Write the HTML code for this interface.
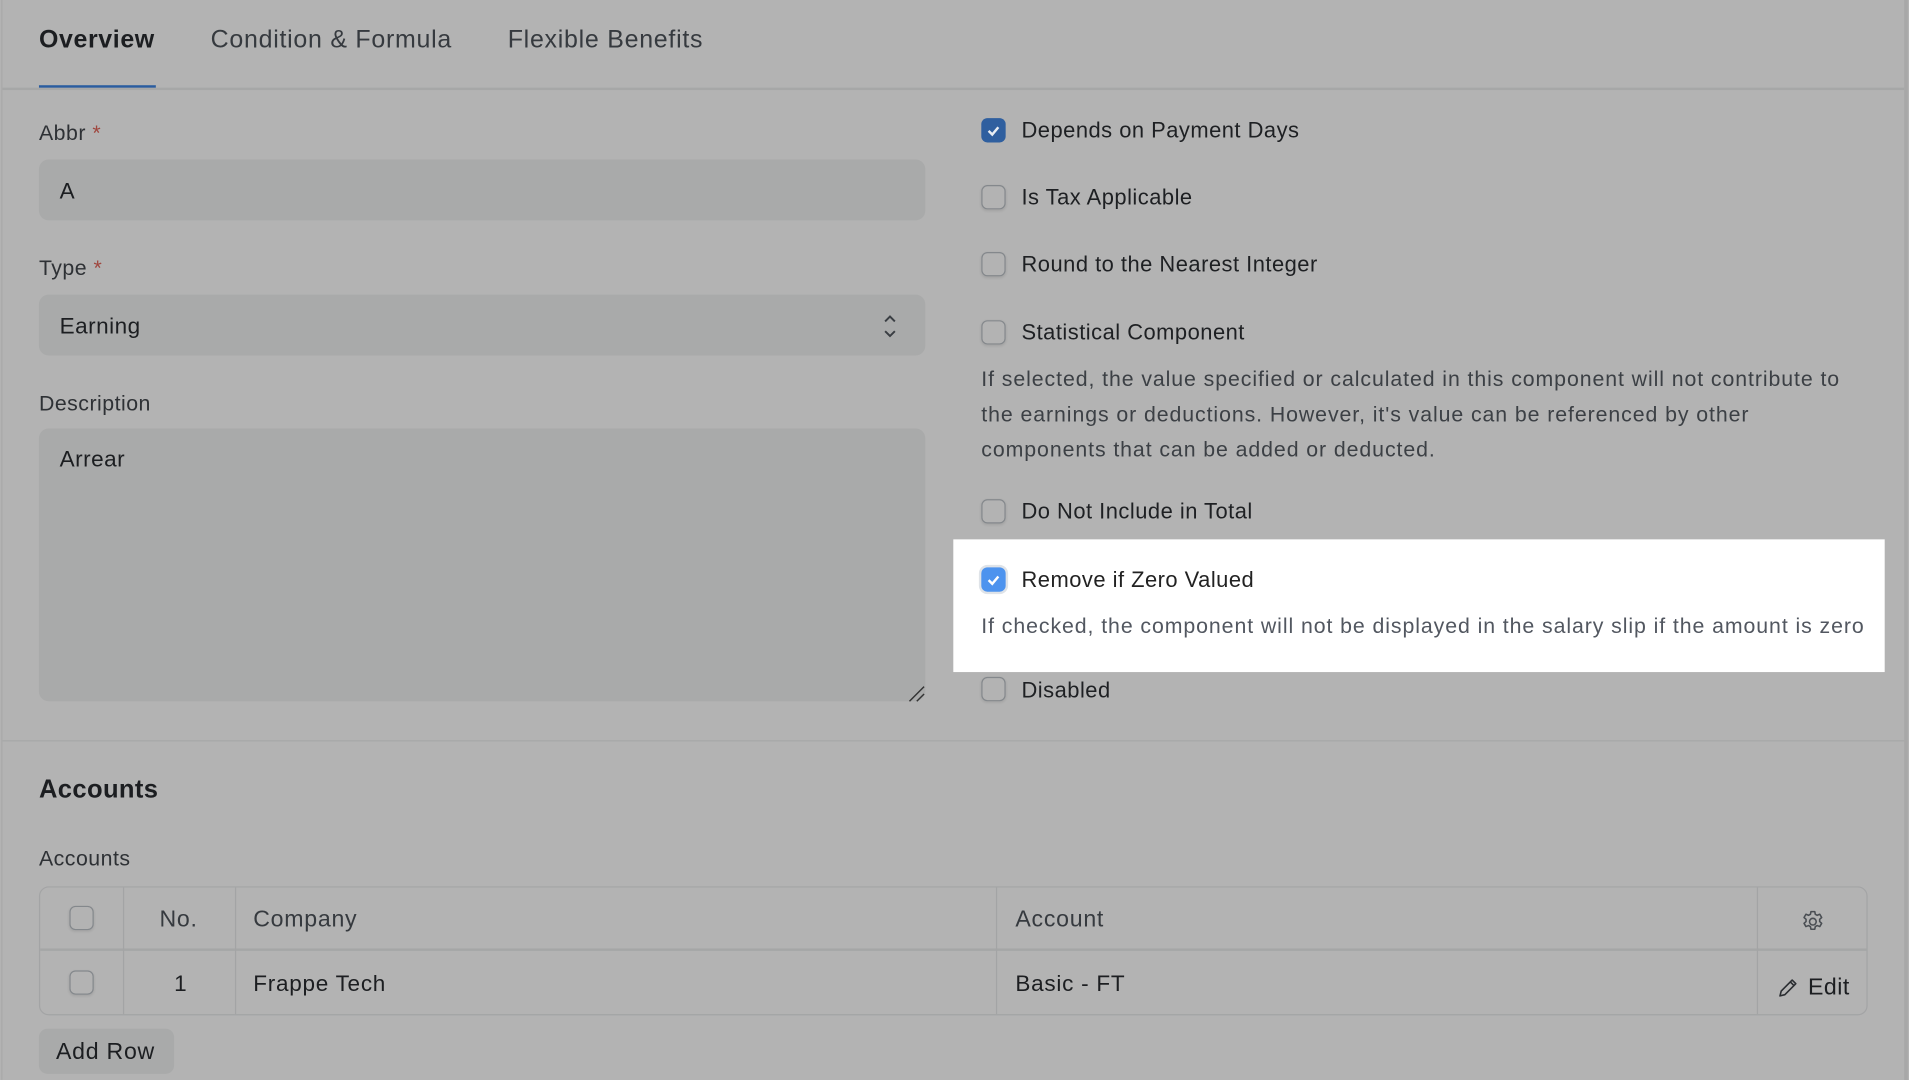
<!DOCTYPE html>
<html><head><meta charset="utf-8"><style>
html,body{margin:0;padding:0;width:1909px;height:1080px;overflow:hidden;background:#b3b3b3;font-family:"Liberation Sans",sans-serif;}
#w{position:absolute;left:0;top:0;width:1568px;height:887px;transform:scale(1.2175);transform-origin:0 0;}
.a{position:absolute;white-space:nowrap;}
.t{color:#1c1e21;}
.lab{font-size:17.5px;color:#2e3135;letter-spacing:0.4px;}
.inp{position:absolute;left:32px;width:728px;background:#a9aaaa;border-radius:8px;}
.cb{position:absolute;width:18px;height:18px;border:1.5px solid #84888c;border-radius:5px;box-shadow:0 1px 2px rgba(0,0,0,.1);}
.cbon{position:absolute;width:20px;height:20px;border-radius:5px;background:#2f5f9f;}
.cl{font-size:18px;color:#1e2023;letter-spacing:0.4px;}
.desc{font-size:17.5px;color:#3c4045;line-height:29px;letter-spacing:0.75px;}
.vl{position:absolute;width:1px;background:#a3a4a5;}
.tb{letter-spacing:0.6px;}
</style></head><body><div id="w">
<div class="a" style="left:1px;top:0;width:1px;height:887px;background:#a9a9a9"></div>
<div class="a" style="left:1564px;top:0;width:3px;height:887px;background:#a8a8a8"></div>
<div class="a t" style="left:32px;top:21px;font-size:20.5px;font-weight:bold;letter-spacing:0.5px;">Overview</div>
<div class="a tb" style="left:173px;top:21px;font-size:20.5px;color:#363a3f;">Condition &amp; Formula</div>
<div class="a tb" style="left:417px;top:21px;font-size:20.5px;color:#363a3f;">Flexible Benefits</div>
<div class="a" style="left:2px;top:72px;width:1562px;height:2px;background:#a6a7a7"></div>
<div class="a" style="left:32px;top:70px;width:96px;height:2px;background:#2a5c9f"></div>

<div class="a lab" style="left:32px;top:99px;">Abbr <span style="color:#a0473f">*</span></div>
<div class="inp" style="top:131px;height:50px;"></div>
<div class="a t" style="left:49px;top:146px;font-size:18.5px;">A</div>
<div class="a lab" style="left:32px;top:210px;">Type <span style="color:#a0473f">*</span></div>
<div class="inp" style="top:242px;height:50px;"></div>
<div class="a t" style="left:49px;top:257px;font-size:18.5px;letter-spacing:0.4px;">Earning</div>
<svg class="a" style="left:724px;top:257px" width="14" height="22" viewBox="0 0 14 22"><path d="M3 7l4-4 4 4M3 15l4 4 4-4" fill="none" stroke="#3a3e43" stroke-width="1.6"/></svg>
<div class="a lab" style="left:32px;top:321px;">Description</div>
<div class="inp" style="top:352px;height:224px;"></div>
<div class="a t" style="left:49px;top:366px;font-size:18.5px;letter-spacing:0.4px;">Arrear</div>
<svg class="a" style="left:746px;top:563px" width="14" height="14"><path d="M1 13L13 1M7 13L13 7" stroke="#333" stroke-width="1.2"/></svg>

<div class="cbon" style="left:806px;top:97px;"></div>
<svg class="a" style="left:806px;top:97px" width="20" height="20"><path d="M6 10.5l3 3 5-6" fill="none" stroke="#e8edf3" stroke-width="2"/></svg>
<div class="a cl" style="left:839px;top:97px;">Depends on Payment Days</div>
<div class="cb" style="left:806px;top:152px;"></div>
<div class="a cl" style="left:839px;top:152px;">Is Tax Applicable</div>
<div class="cb" style="left:806px;top:207px;"></div>
<div class="a cl" style="left:839px;top:207px;">Round to the Nearest Integer</div>
<div class="cb" style="left:806px;top:263px;"></div>
<div class="a cl" style="left:839px;top:263px;">Statistical Component</div>
<div class="a desc" style="left:806px;top:297px;">If selected, the value specified or calculated in this component will not contribute to<br>the earnings or deductions. However, it's value can be referenced by other<br>components that can be added or deducted.</div>
<div class="cb" style="left:806px;top:410px;"></div>
<div class="a cl" style="left:839px;top:410px;">Do Not Include in Total</div>

<div class="a" style="left:783px;top:443px;width:765px;height:109px;background:#fff"></div>
<div class="a" style="left:804px;top:464px;width:24px;height:24px;border-radius:7px;background:#dfe3e8"></div>
<div class="a" style="left:806px;top:466px;width:20px;height:20px;border-radius:5px;background:#4d93ee"></div>
<svg class="a" style="left:806px;top:466px" width="20" height="20"><path d="M6 10.5l3 3 5-6" fill="none" stroke="#fff" stroke-width="2"/></svg>
<div class="a cl" style="left:839px;top:466px;color:#222">Remove if Zero Valued</div>
<div class="a desc" style="left:806px;top:500px;color:#525760">If checked, the component will not be displayed in the salary slip if the amount is zero</div>

<div class="cb" style="left:806px;top:556px;"></div>
<div class="a cl" style="left:839px;top:557px;">Disabled</div>

<div class="a" style="left:2px;top:608px;width:1562px;height:1px;background:#a6a7a7"></div>
<div class="a t" style="left:32px;top:637px;font-size:21px;font-weight:bold;letter-spacing:0.3px;">Accounts</div>
<div class="a lab" style="left:32px;top:695px;">Accounts</div>

<div class="a" style="left:32px;top:728px;width:1500px;height:104px;border:1px solid #a3a4a5;border-radius:8px;"></div>
<div class="a" style="left:33px;top:779px;width:1500px;height:2px;background:#a5a6a6"></div>
<div class="vl" style="left:101px;top:729px;height:104px"></div>
<div class="vl" style="left:193px;top:729px;height:104px"></div>
<div class="vl" style="left:818px;top:729px;height:104px"></div>
<div class="vl" style="left:1443px;top:729px;height:104px"></div>
<div class="cb" style="left:57px;top:744px;"></div>
<div class="cb" style="left:57px;top:797px;"></div>
<div class="a tb" style="left:131px;top:745px;font-size:19px;color:#363a3f;">No.</div>
<div class="a tb" style="left:208px;top:745px;font-size:19px;color:#363a3f;">Company</div>
<div class="a tb" style="left:834px;top:745px;font-size:19px;color:#363a3f;">Account</div>
<svg class="a" style="left:1478px;top:746px" width="22" height="22" viewBox="0 0 24 24"><circle cx="12" cy="12" r="3" fill="none" stroke="#4a4e53" stroke-width="1.4"/><path d="M10.3 3h3.4l.5 2.4 1.7.9 2.3-.9 1.7 2.9-1.8 1.6v2l1.8 1.6-1.7 2.9-2.3-.9-1.7.9-.5 2.4h-3.4l-.5-2.4-1.7-.9-2.3.9-1.7-2.9 1.8-1.6v-2L4.1 8.3l1.7-2.9 2.3.9 1.7-.9z" fill="none" stroke="#4a4e53" stroke-width="1.4" stroke-linejoin="round"/></svg>
<div class="a t" style="left:143px;top:797px;font-size:18.5px;">1</div>
<div class="a t tb" style="left:208px;top:797px;font-size:18.5px;">Frappe Tech</div>
<div class="a t tb" style="left:834px;top:797px;font-size:18.5px;">Basic - FT</div>
<svg class="a" style="left:1460px;top:803px" width="17" height="17" viewBox="0 0 17 17"><path d="M2 15l1-4 9-9 3 3-9 9z M10.5 3.5l3 3" fill="none" stroke="#2a2d31" stroke-width="1.3" stroke-linejoin="round"/></svg>
<div class="a t" style="left:1485px;top:801px;font-size:19px;letter-spacing:0.4px;">Edit</div>

<div class="a" style="left:32px;top:845px;width:111px;height:37px;background:#a9aaaa;border-radius:7px;"></div>
<div class="a t tb" style="left:46px;top:854px;font-size:19px;">Add Row</div>
</div></body></html>
